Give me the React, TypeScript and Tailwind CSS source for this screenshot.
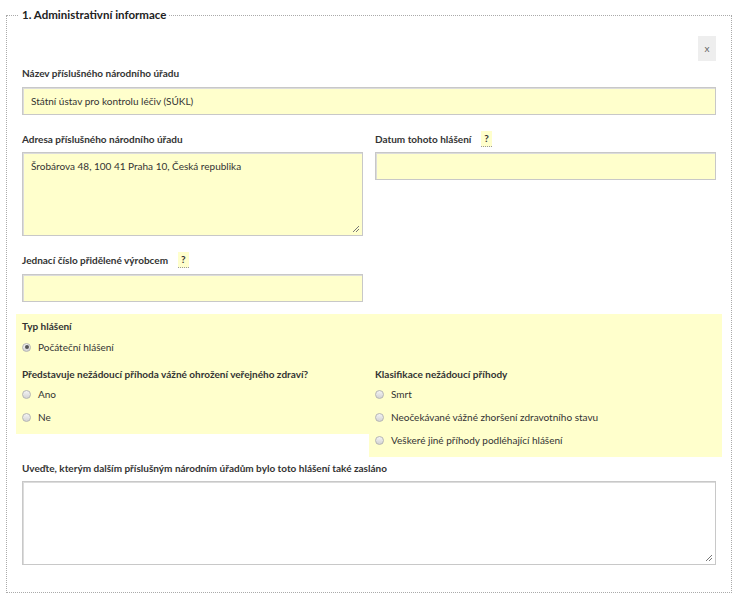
import React from "react";

function Help() {
  return (
    <span className="ml-[10px] inline-block border-b border-dotted border-[#999] bg-[#ffffcc] px-[3px] text-[10px] font-bold leading-[15px] text-[#333]">
      ?
    </span>
  );
}

function Radio({ label, checked = false }: { label: string; checked?: boolean }) {
  return (
    <label className="flex h-[16px] items-center gap-[7px] text-[#333]">
      <span className="flex h-[9px] w-[9px] items-center justify-center rounded-full border border-[#b5b5b5] bg-gradient-to-b from-[#f4f4f4] to-[#d4d4d4]">
        {checked && <span className="h-[4px] w-[4px] rounded-full bg-[#555]" />}
      </span>
      <span>{label}</span>
    </label>
  );
}

function Resize() {
  return (
    <svg className="absolute bottom-[2px] right-[2px]" width="8" height="8" viewBox="0 0 8 8">
      <path d="M7 1 L1 7 M7 4 L4 7" stroke="#777" strokeWidth="1" />
    </svg>
  );
}

const input = "h-[28px] w-full border border-[#c8c8c8] bg-[#ffffcc] shadow-[inset_1px_1px_0_#dcdcdc]";

export default function App() {
  return (
    <div className="min-h-[601px] bg-white pl-[6px] pt-[7px] text-[10px] text-[#333]" style={{ fontFamily: "Lato, 'Liberation Sans', sans-serif" }}>
      <fieldset className="w-[726px] border border-dotted border-[#aaa] px-[15px] pb-[27px]">
        <legend className="-ml-[3px] px-[3px] text-[11.5px] font-bold leading-[16px] text-[#222]">
          1. Administrativní informace
        </legend>

        <div className="mt-[13px] flex justify-end">
          <button type="button" className="h-[25px] w-[18px] bg-[#eee] text-[10px] text-[#666]">
            x
          </button>
        </div>

        {/* Název */}
        <div className="mt-[4px] font-bold leading-[16px]">Název příslušného národního úřadu</div>
        <div className={`${input} mt-[6px] flex items-center px-[8px]`}>Státní ústav pro kontrolu léčiv (SÚKL)</div>

        {/* Adresa + datum */}
        <div className="mt-[16px] grid grid-cols-2 gap-x-[12px]">
          <div>
            <div className="font-bold leading-[16px]">Adresa příslušného národního úřadu</div>
            <div className="relative mt-[5px] h-[84px] border border-[#c8c8c8] bg-[#ffffcc] px-[8px] py-[6px] shadow-[inset_1px_1px_0_#dcdcdc]">
              Šrobárova 48, 100 41 Praha 10, Česká republika
              <Resize />
            </div>
          </div>
          <div>
            <div className="flex items-center font-bold leading-[16px]">
              Datum tohoto hlášení
              <Help />
            </div>
            <div className={`${input} mt-[5px]`} />
          </div>
        </div>

        {/* Jednací číslo */}
        <div className="mt-[16px] grid grid-cols-2 gap-x-[12px]">
          <div>
            <div className="flex items-center font-bold leading-[16px]">
              Jednací číslo přidělené výrobcem
              <Help />
            </div>
            <div className={`${input} mt-[6px] h-[27px]`} />
          </div>
        </div>

        {/* Radio block */}
        <div className="-mx-[6px] mt-[12px]">
          <div className="bg-[#ffffcc] px-[6px] pb-[4px] pt-[4px]">
            <div className="font-bold leading-[16px]">Typ hlášení</div>
            <div className="mt-[5px]">
              <Radio label="Počáteční hlášení" checked />
            </div>
          </div>
          <div className="flex items-start">
            <div className="w-[353px] bg-[#ffffcc] px-[6px] pb-[9px] pt-[7px]">
              <div className="font-bold leading-[16px]">Představuje nežádoucí příhoda vážné ohrožení veřejného zdraví?</div>
              <div className="mt-[4px] flex flex-col gap-[7px]">
                <Radio label="Ano" />
                <Radio label="Ne" />
              </div>
            </div>
            <div className="flex-1 bg-[#ffffcc] px-[6px] pb-[9px] pt-[7px]">
              <div className="font-bold leading-[16px]">Klasifikace nežádoucí příhody</div>
              <div className="mt-[4px] flex flex-col gap-[7px]">
                <Radio label="Smrt" />
                <Radio label="Neočekávané vážné zhoršení zdravotního stavu" />
                <Radio label="Veškeré jiné příhody podléhající hlášení" />
              </div>
            </div>
          </div>
        </div>

        {/* Uveďte */}
        <div className="mt-[3px] font-bold leading-[16px]">Uveďte, kterým dalším příslušným národním úřadům bylo toto hlášení také zasláno</div>
        <div className="relative mt-[5px] h-[84px] border border-[#c8c8c8] bg-white shadow-[inset_1px_1px_0_#dcdcdc]">
          <Resize />
        </div>
      </fieldset>
    </div>
  );
}
